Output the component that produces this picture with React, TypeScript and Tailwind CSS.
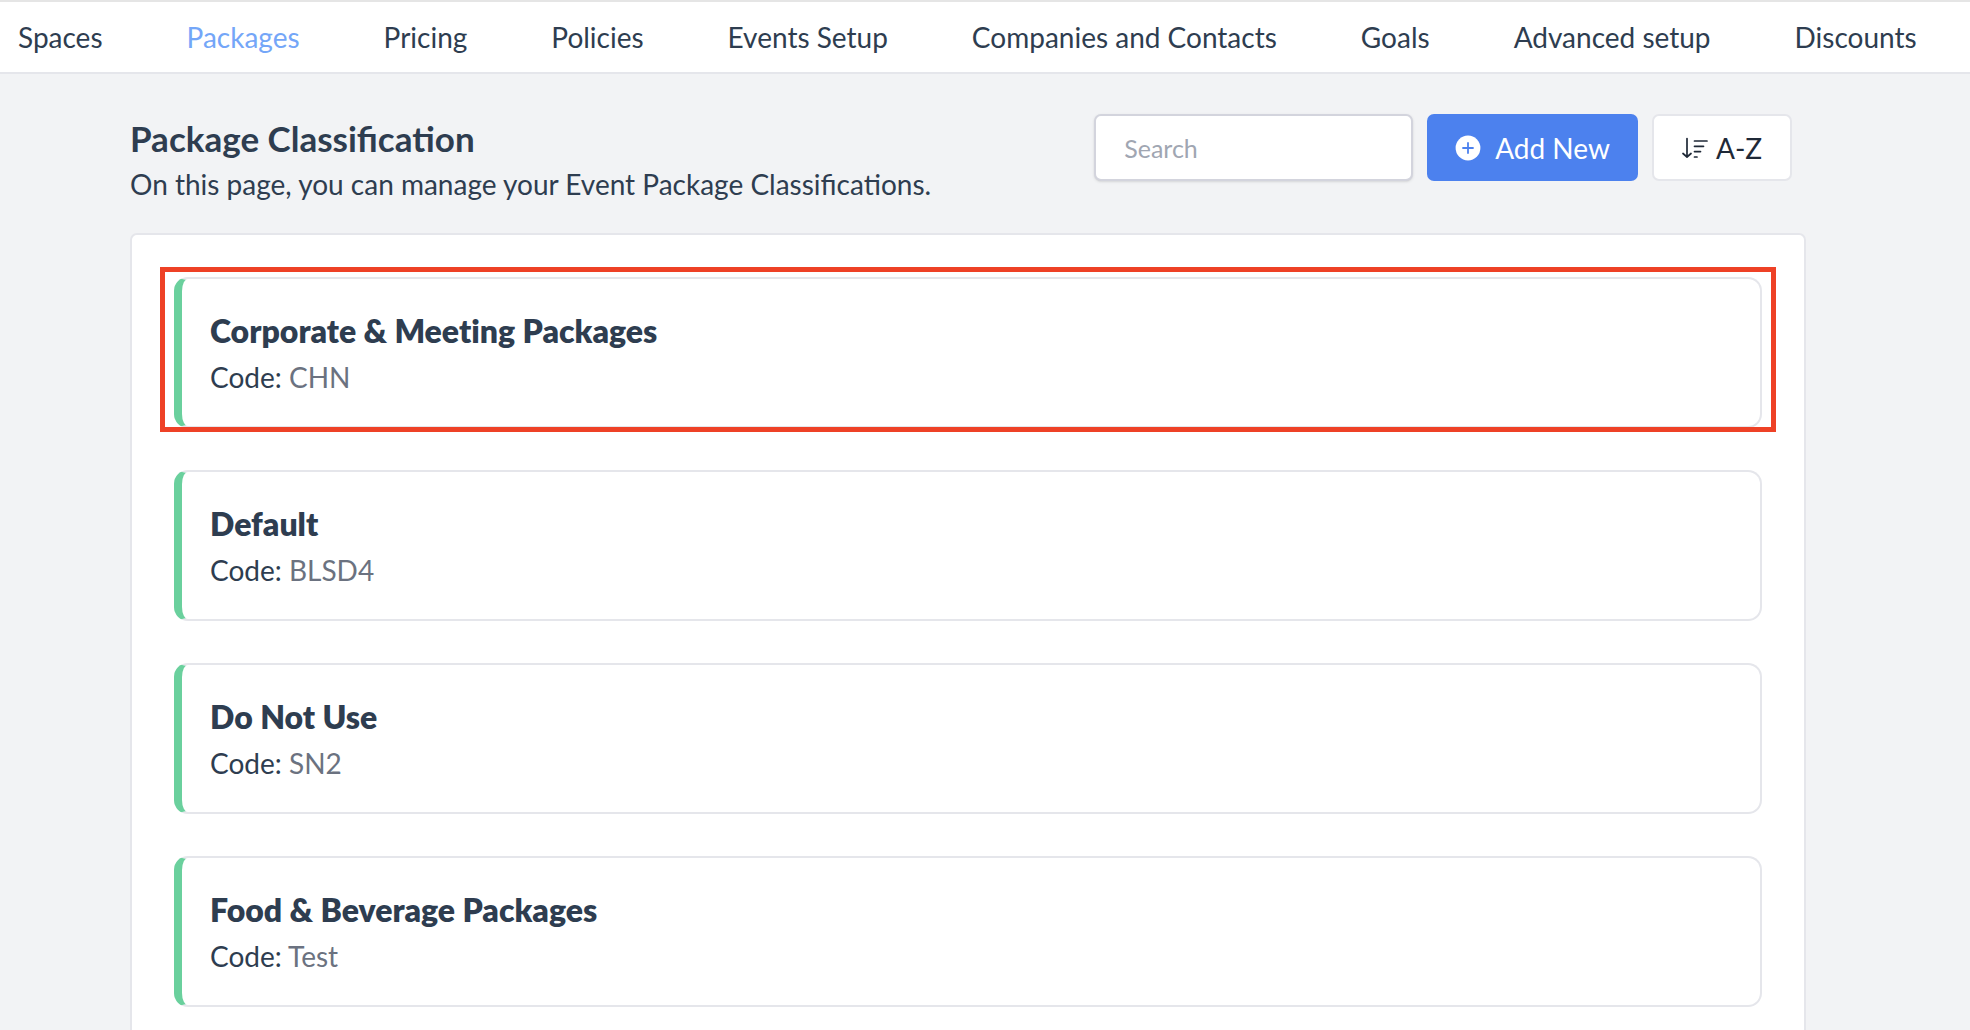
const navItems = [
  "Spaces",
  "Packages",
  "Pricing",
  "Policies",
  "Events Setup",
  "Companies and Contacts",
  "Goals",
  "Advanced setup",
  "Discounts",
];

const classifications = [
  { name: "Corporate & Meeting Packages", code: "CHN" },
  { name: "Default", code: "BLSD4" },
  { name: "Do Not Use", code: "SN2" },
  { name: "Food & Beverage Packages", code: "Test" },
];

function PlusCircleIcon() {
  return (
    <svg className="size-[26px]" viewBox="0 0 26 26" fill="none" aria-hidden="true">
      <circle cx="13" cy="13" r="12.4" fill="white" />
      <path d="M13 8v10M8 13h10" stroke="#4c81ee" strokeWidth="1.8" strokeLinecap="round" />
    </svg>
  );
}

function SortIcon() {
  return (
    <svg className="h-[22px] w-[26px]" viewBox="0 0 26 22" fill="none" stroke="currentColor" strokeWidth="1.7" strokeLinecap="round" strokeLinejoin="round" aria-hidden="true">
      <path d="M5 1.5V20M1 16.5l4 3.5 4-3.5" />
      <path d="M12.5 4H25M12.5 9.3h9M12.5 14.6h6M12.5 20h2.5" />
    </svg>
  );
}

export default function App() {
  return (
    <div className="h-screen overflow-hidden bg-[#f2f3f5] font-['Lato',sans-serif] text-[28px] leading-[42px] text-[#2e3d50]">
      <nav className="flex h-[74px] items-center gap-[84px] border-y-2 border-t-[#e5e5e5] border-b-[#e5e6eb] bg-white px-[18px] whitespace-nowrap">
        {navItems.map((item) => (
          <a key={item} href="#" className={item === "Packages" ? "text-[#74a6f8]" : ""}>
            {item}
          </a>
        ))}
      </nav>

      <main className="mr-[164px] ml-[130px] pt-10">
        <header className="flex items-start justify-between pr-[14px]">
          <div className="pt-[3px]">
            <h1 className="text-[35px] leading-[42px] font-bold">Package Classification</h1>
            <p className="pt-1">On this page, you can manage your Event Package Classifications.</p>
          </div>
          <div className="flex gap-[14px]">
            <input
              type="search"
              aria-label="Search"
              placeholder="Search"
              className="h-[67px] w-[319px] rounded-[7px] border-2 border-[#d3d4dd] bg-white px-7 text-[25px] shadow-sm placeholder:text-[#a0a6b2]"
            />
            <button className="flex h-[67px] items-center gap-[14px] rounded-[7px] bg-[#4c81ee] px-7 text-white">
              <PlusCircleIcon />
              Add New
            </button>
            <button className="flex h-[67px] items-center gap-2 rounded-[7px] border-2 border-[#e5e6eb] bg-white px-7 text-[#1f2937]">
              <SortIcon />
              A-Z
            </button>
          </div>
        </header>

        <section className="mt-[28px] flex flex-col gap-[42px] rounded-[7px] border-2 border-[#e5e6eb] bg-white p-[42px]">
          {classifications.map((c, i) => (
            <article key={c.code} className="relative rounded-[14px] border-2 border-l-8 border-[#e5e6eb] border-l-[#6ad09d] px-7 pt-[31px] pb-7">
              <h2 className="text-[32px] leading-[42px] font-extrabold [font-variant-ligatures:none]">{c.name}</h2>
              <p className="pt-1">
                Code: <span className="text-[#6b7280]">{c.code}</span>
              </p>
              {/* highlight frame */}
              {i === 0 && (
                <div className="pointer-events-none absolute -top-[12px] -right-[16px] -bottom-[6px] -left-[22px] border-[5px] border-[#ee4126]" />
              )}
            </article>
          ))}
        </section>
      </main>
    </div>
  );
}
